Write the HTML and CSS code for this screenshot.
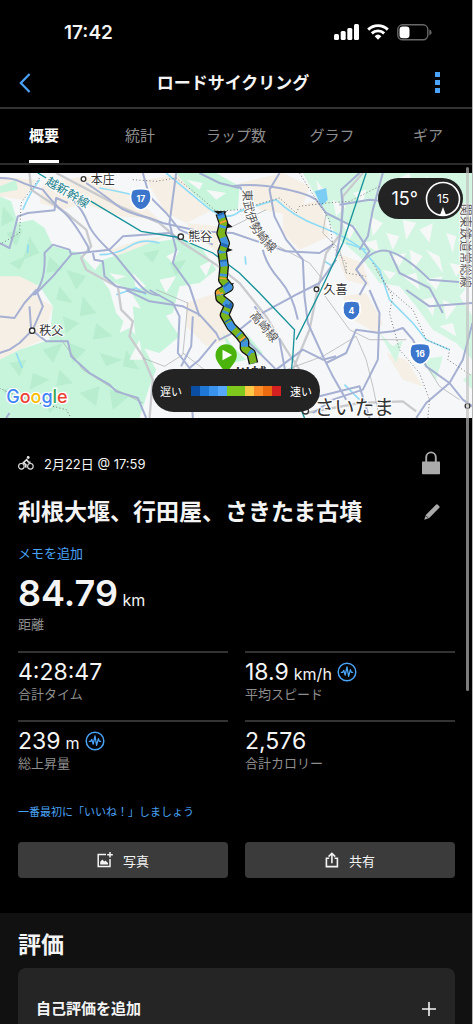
FILE: index.html
```html
<!DOCTYPE html>
<html lang="ja">
<head>
    <meta charset="UTF-8">
    <meta name="viewport" content="width=device-width, initial-scale=1">
    <title>ロードサイクリング</title>
    <link rel="stylesheet" href="styles.css">
</head>
<body>
    <div class="app">
        <div class="scroll-thumb"></div>

        <!-- Status bar -->
        <div class="status-bar">
            <span class="clock">17:42</span>
            <div class="status-icons">
                <svg width="25" height="16" viewBox="0 0 25 16" fill="#fff">
                    <rect x="0" y="10" width="5" height="6" rx="1.5"/>
                    <rect x="6.7" y="7" width="5" height="9" rx="1.5"/>
                    <rect x="13.3" y="4" width="5" height="12" rx="1.5"/>
                    <rect x="20" y="0" width="5" height="16" rx="1.5"/>
                </svg>
                <svg width="22" height="16" viewBox="0 0 22 16" fill="none" stroke="#fff" stroke-width="2.9">
                    <path d="M1.2 5.6 A14 14 0 0 1 20.8 5.6"/>
                    <path d="M4.8 9.4 A9 9 0 0 1 17.2 9.4"/>
                    <path d="M7.6 12.2 A5 5 0 0 1 14.4 12.2 L11 15.8 Z" fill="#fff" stroke="none"/>
                </svg>
                <svg width="35" height="17" viewBox="0 0 35 17">
                    <rect x="0.8" y="0.8" width="30" height="15" rx="4.8" fill="none" stroke="#686868" stroke-width="1.4"/>
                    <path d="M32.4 5.5 Q34.6 6.3 34.6 8.4 Q34.6 10.5 32.4 11.3 Z" fill="#686868"/>
                    <rect x="2.5" y="2.6" width="10" height="11.6" rx="3.2" fill="#fff"/>
                </svg>
            </div>
        </div>

        <!-- Title bar -->
        <header class="nav-bar">
            <button class="icon-btn" aria-label="戻る">
                <svg width="12" height="20" viewBox="0 0 12 20" fill="none" stroke="#4aa3f7" stroke-width="2.2">
                    <path d="M10.6 1 L1.8 10 L10.6 19"/>
                </svg>
            </button>
            <h1>ロードサイクリング</h1>
            <button class="icon-btn" aria-label="メニュー">
                <svg width="5" height="21" viewBox="0 0 5 21" fill="#4aa3f7">
                    <path d="M0 0h5v5H0zM0 8h5v5H0zM0 16h5v5H0z"/>
                </svg>
            </button>
        </header>

        <nav class="tabs">
            <a href="#" class="active">概要</a>
            <a href="#">統計</a>
            <a href="#">ラップ数</a>
            <a href="#">グラフ</a>
            <a href="#">ギア</a>
        </nav>

        <!-- Route map -->
        <div class="map">
            <svg class="map-canvas" viewBox="0 0 1419 735" preserveAspectRatio="xMidYMid slice">
                <defs>
                    <path id="ride" d="M662 121 L672 151 665 181 677 211 668 236 674 281 670 321 688 343 660 359 662 376 688 396 675 426 695 461 720 486 735 506 735 526 755 541 762 571"/>
                    <path id="tobu" d="M731 50 C730 130 752 190 836 256"/>
                </defs>
                <rect width="1419" height="735" fill="#f6f7f8"/>

                <!-- farmland and towns -->
                <g fill="#f5efe5">
                    <path d="M0 10 L110 20 70 80 0 70zM130 30 L260 10 400 70 480 140 360 130 250 90 190 110 120 90z"/>
                    <path d="M440 20 L560 0 600 90 640 110 560 150 500 120zM560 150 L650 160 660 240 600 200z"/>
                    <path d="M0 360 L60 340 160 400 130 500 60 530 0 560zM330 230 L420 200 500 190 440 220 360 260z"/>
                    <path d="M720 30 L850 0 930 40 900 130 780 110zM850 110 L960 80 990 190 900 230 850 180z"/>
                    <path d="M560 390 L650 360 700 400 690 500 620 520 560 460zM1030 370 L1100 360 1150 450 1130 480 1060 440z"/>
                    <path d="M1160 540 L1220 560 1270 640 1210 620zM1010 240 L1090 270 1110 340 1040 320zM0 300 L90 300 120 350 0 370z"/>
                </g>

                <!-- mountains -->
                <g fill="#c6f5dc">
                    <path d="M0 70 L35 85 55 150 100 140 135 165 160 220 240 240 285 290 330 350 350 420 420 500 470 590 450 640 420 735 0 735 0 560 60 530 150 500 160 400 120 340 60 310 0 310z"/>
                    <path d="M375 240 L450 210 545 195 610 230 650 290 600 330 540 340 520 420 450 450 390 350 280 300 310 260z"/>
                    <path d="M530 0 L650 0 720 40 715 110 640 115 580 60z"/>
                    <path d="M400 400 L500 430 540 490 480 540 410 520zM670 480 L700 520 740 560 700 570zM740 480 L790 540 760 560z"/>
                    <path d="M0 40 L50 20 55 50 0 60z"/>
                </g>
                <g fill="#d3f6e3">
                    <path d="M910 0 L1419 0 1419 320 1380 370 1419 430 1419 560 1370 510 1300 470 1250 400 1200 340 1140 330 1090 260 1010 190 960 90z"/>
                    <path d="M1140 480 L1180 520 1210 500 1190 570zM1260 560 L1330 550 1310 620zM1390 620 L1419 600 1419 650z"/>
                </g>

                <!-- relief -->
                <g fill="#b9edd0">
                    <path d="M10 100 L45 140 5 160zM20 180 L70 170 50 220zM90 190 L120 240 70 260zM30 270 L80 250 60 290zM150 250 L190 290 140 300zM200 290 L260 310 230 350zM180 340 L220 390 170 380z"/>
                    <path d="M250 370 L290 420 240 430zM190 430 L240 450 200 480zM290 450 L340 490 280 500zM130 530 L190 510 160 570zM30 570 L80 560 60 610zM210 510 L260 530 220 570zM100 600 L150 620 90 650z"/>
                    <path d="M180 590 L220 630 170 640zM300 540 L370 560 320 580zM380 530 L420 590 370 580zM240 660 L300 640 290 700zM330 650 L390 670 340 710zM10 650 L50 640 30 690zM130 670 L190 680 150 720zM430 240 L480 230 460 270zM510 270 L560 260 530 310z"/>
                </g>
                <g fill="#f6f8f8">
                    <path d="M380 420 L400 460 360 480zM400 300 L440 340 410 350zM420 500 L430 560 390 560zM500 250 L540 230 520 270zM480 320 L530 310 500 360zM560 20 L610 30 600 50zM620 50 L680 60 650 80zM600 280 L640 260 620 310zM330 300 L380 310 350 320z"/>
                    <path d="M950 20 L980 60 960 70zM1000 80 L1040 100 1010 130zM1060 60 L1100 50 1090 90zM1030 150 L1070 160 1050 200zM1110 130 L1150 150 1120 190zM1090 210 L1130 200 1140 240zM1160 180 L1200 190 1180 230z"/>
                    <path d="M1210 140 L1250 150 1220 200zM1260 170 L1300 150 1290 210zM1170 250 L1220 240 1200 280zM1230 230 L1270 250 1240 290zM1280 230 L1320 250 1330 300zM1210 310 L1250 300 1260 350zM1280 320 L1330 310 1310 350zM1340 180 L1370 190 1360 240z"/>
                    <path d="M1270 380 L1310 370 1300 430zM1330 380 L1370 400 1340 440zM1320 460 L1360 450 1370 490zM1190 20 L1230 0 1240 50zM1280 10 L1310 40 1270 60zM1350 270 L1400 280 1370 310zM1150 290 L1190 300 1170 320z"/>
                </g>

                <!-- water -->
                <path d="M945 55 L980 45 985 80 965 100z" fill="#7ccdf4"/>
                <g fill="none" stroke="#90dcf5" stroke-width="5">
                    <path d="M300 45 Q360 55 440 75M120 20 Q90 60 70 110M500 0 Q560 50 620 100 T720 115 L830 80 Q880 130 960 160 T1090 230 L1140 290 1170 380"/>
                    <path d="M300 245 Q350 245 390 220 T480 210M350 365 L410 345 440 365M50 540 L68 585M86 215 L84 240M737 250 L739 275M1040 210 L1100 230M975 265 L1000 280M1035 635 L1080 680M1170 380 L1240 450 1280 500 1350 530"/>
                </g>

                <!-- railways -->
                <g fill="none" stroke="#c9cbce" stroke-width="7">
                    <path d="M90 0 L95 50 200 120 260 170 275 220 245 255 260 290 350 340"/>
                    <path d="M170 0 L360 100 480 150 550 210 650 275 720 330 800 430 860 530 900 590"/>
                    <path d="M1090 0 L1030 70 1025 180 980 240 950 370 930 470 880 590"/>
                    <path d="M355 340 L365 410 400 445 390 490 430 550 460 620 450 735"/>
                    <path d="M920 720 L1080 690 1210 685 1250 715"/>
                </g>
                <g fill="none" stroke="#a8a9aa" stroke-width="2">
                    <path d="M430 555 L495 580 550 545 565 390 470 350M700 160 L800 110M780 190 L930 270 970 320M860 590 L970 550 1070 490 1100 560 1120 640 1140 735"/>
                    <path d="M980 120 L970 180 1020 230 1040 300M970 360 L1050 470 1110 500 1220 500M1270 560 L1320 640 1380 680M185 500 L250 590 330 640 430 690M550 540 L640 610"/>
                </g>

                <!-- roads -->
                <g fill="none" stroke="#a5b0d2" stroke-width="6" stroke-linejoin="round">
                    <path d="M0 15 Q40 15 60 25 T130 50 Q160 90 190 115 T265 220 L270 240"/>
                    <path d="M0 210 L30 225 40 190 55 130 85 120 165 112 170 75 205 90M215 75 Q250 110 265 150 T350 250 Q390 300 420 335 T480 366"/>
                    <path d="M100 366 Q140 330 135 240 L160 215 210 230 215 245 160 310 105 366M215 243 L330 230 370 190 510 180"/>
                    <path d="M260 30 Q320 70 350 95 T450 135 L490 150 600 175 700 180 860 235M430 0 L450 70 500 120 540 170 640 215"/>
                    <path d="M530 0 L510 150 530 230 520 270 570 340 600 430M510 180 L540 200"/>
                    <path d="M280 240 L285 260 310 265 315 310 350 340 440 360M0 430 L45 435 75 390 110 351 130 400 100 470 60 510 30 530 0 540M90 400 L95 470 140 505 205 505 215 550 270 600 330 635 350 655 415 675 440 735"/>
                    <path d="M380 351 L450 385 550 400 600 425 650 480 660 500 720 470 770 430 890 365 960 330 1010 260"/>
                    <path d="M450 351 L520 390 540 430 535 540 570 585 600 560 650 500M570 585 L580 735M580 430 L575 520 545 580"/>
                    <path d="M720 40 L740 70 M699 40 Q760 30 840 45 T950 80 L980 120 1060 160 1110 235 1070 290 1100 330 1080 366"/>
                    <path d="M840 0 L810 50 825 130 860 200 910 260 915 370 925 450 975 560 1000 610 1040 680"/>
                    <path d="M1080 0 L1025 50 1030 100 1025 170 1010 250M1150 0 L1120 110 1105 190 1080 230M1020 95 L1110 80 1220 90"/>
                    <path d="M790 230 Q800 275 840 320 T895 440M860 235 L960 240 1000 215"/>
                    <path d="M765 400 L840 500 860 610 830 650M720 480 L760 520 830 590 910 530 970 560 1010 550"/>
                    <path d="M1110 351 L1140 420 1135 560 1090 650 1000 680 940 720M850 700 L960 670 1080 640 1110 735M1140 480 L1070 470 1040 540 980 570"/>
                    <path d="M1070 290 Q1120 220 1170 235 T1290 320 L1419 330M1170 235 L1200 300 1290 345 1330 420"/>
                    <path d="M1135 480 L1180 475 1210 465 1240 500 1280 580 1350 630 1390 680 1419 700M1419 450 L1390 560 1350 630 1280 690 1250 735"/>
                    <path d="M600 0 L660 30 720 45M1220 351 L1290 400 1419 390M20 735 L30 720"/>
                </g>

                <!-- prefecture borders -->
                <g fill="none" stroke="#777" stroke-width="3" stroke-dasharray="3 7">
                    <path d="M120 15 L65 90 60 180 0 215M0 645 L30 660 120 690 200 710 215 735M400 20 L470 25 530 15 600 70 650 115 720 110 840 75 890 120 900 100 980 90 1050 85 1140 40"/>
                    <path d="M900 0 L950 80 990 140 1000 220 1040 270 1040 300 1100 310M1130 290 L1180 370 1170 420 1200 530 1260 600 1290 680 1285 735"/>
                    <path d="M1120 270 L1170 350 1240 410 1280 500 1350 530 1345 560 1419 610"/>
                </g>

                <!-- shinkansen -->
                <g fill="none" stroke="#18939b" stroke-width="4">
                    <path d="M115 0 L140 15M270 82 L425 175 530 192 640 240 720 300 780 360 885 470 880 550 875 600"/>
                    <path d="M1100 0 L1030 210 960 360 890 500"/>
                    <path d="M905 710 L915 735"/>
                </g>

                <!-- place names -->
                <g class="place">
                    <circle cx="252" cy="18" r="7"/><text x="274" y="33">本庄</text>
                    <circle cx="544" cy="191" r="8"/><text x="566" y="205">熊谷</text>
                    <circle cx="98" cy="473" r="8"/><text x="119" y="486">秩父</text>
                    <circle cx="951" cy="349" r="7"/><text x="972" y="363">久喜</text>
                    <circle cx="918" cy="714" r="9"/><text class="city" x="945" y="727">さいたま</text>
                    <circle cx="1404" cy="699" r="7"/>
                    <text class="town" x="705" y="622">川越</text>
                </g>
                <g class="line-name">
                    <text><textPath href="#tobu">東武伊勢崎線</textPath></text>
                    <text transform="translate(750 428) rotate(50)">高崎線</text>
                    <text transform="translate(1384 92) rotate(90)">関東鉄道常総線</text>
                    <text class="shinkansen" transform="translate(136 32) rotate(31)">越新幹線</text>
                </g>

                <!-- route shields -->
                <g class="shield" transform="translate(424 79)">
                    <path d="M-26 -28 Q0 -36 26 -28 Q34 -10 29 6 Q20 28 0 32 Q-20 28 -29 6 Q-34 -10 -26 -28z"/><text y="9">17</text>
                </g>
                <g class="shield" transform="translate(1056 413)">
                    <path d="M-22 -26 Q0 -33 22 -26 Q29 -10 25 6 Q18 25 0 29 Q-18 25 -25 6 Q-29 -10 -22 -26z"/><text y="9">4</text>
                </g>
                <g class="shield" transform="translate(1262 543)">
                    <path d="M-26 -28 Q0 -36 26 -28 Q34 -10 29 6 Q20 28 0 32 Q-20 28 -29 6 Q-34 -10 -26 -28z"/><text y="9">16</text>
                </g>

                <!-- ride track, coloured by speed -->
                <g class="track">
                    <path d="M642 113 L682 115 668 132zM682 148 L700 162 678 166zM680 223 L700 231 676 239zM644 228 L660 234zM672 330 L704 331 686 352z" fill="#141414"/>
                    <use href="#ride" class="outline"/>
                    <use href="#ride" class="speed-mid"/>
                    <use href="#ride" class="speed-slow"/>
                    <use href="#ride" class="speed-slower"/>
                    <use href="#ride" class="speed-fast"/>
                </g>
                <g transform="translate(680 546)">
                    <path d="M-32 0 A32 32 0 1 1 32 0 C32 22 12 36 0 56 C-12 36 -32 22 -32 0z" fill="#4ab40c"/>
                    <path d="M-11 -16 L18 0 -11 16z" fill="#fff"/>
                </g>

                <text class="google" x="20" y="691"><tspan fill="#4285f4">G</tspan><tspan fill="#ea4335">o</tspan><tspan fill="#fbbc05">o</tspan><tspan fill="#4285f4">g</tspan><tspan fill="#34a853">l</tspan><tspan fill="#ea4335">e</tspan></text>
            </svg>

            <div class="weather">
                <span>15°</span>
                <svg width="36" height="36" viewBox="0 0 36 36">
                    <circle cx="18" cy="18" r="16.5" fill="none" stroke="#fff" stroke-width="1.6"/>
                    <path d="M18 26 L21 34 Q18 35 15 34z" fill="#fff"/>
                    <text x="18" y="22" text-anchor="middle">15</text>
                </svg>
            </div>

            <div class="legend">
                <span>遅い</span>
                <div class="legend-bar">
                    <i class="s1"></i><i class="s2"></i><i class="s3"></i><i class="s4"></i><i class="s5"></i><i class="s5"></i><i class="s6"></i><i class="s7"></i><i class="s8"></i><i class="s9"></i>
                </div>
                <span>速い</span>
            </div>
        </div>

        <!-- Activity summary -->
        <main class="summary">
            <div class="row meta">
                <svg width="16" height="14" viewBox="0 0 16 14" fill="none" stroke="#e8e8e8" stroke-width="1.1">
                    <circle cx="3.4" cy="10.3" r="2.8"/>
                    <circle cx="12.4" cy="10.3" r="2.8"/>
                    <path d="M7.8 11.6 L7.9 8.6 L5.4 6.6 L8.6 3.6 L10.4 6 L12.6 6.2" stroke-width="1.6"/>
                    <circle cx="10.2" cy="1.5" r="1.4" fill="#e8e8e8" stroke="none"/>
                </svg>
                <span class="date">2月22日 @ 17:59</span>
                <button class="icon-btn" aria-label="非公開">
                    <svg width="18" height="24" viewBox="0 0 18 24">
                        <path d="M4.2 12 V6.2 A4.8 4.8 0 0 1 13.8 6.2 V12" fill="none" stroke="#aaa" stroke-width="1.9"/>
                        <rect y="10.6" width="18" height="12.6" rx="0.6" fill="#aaa"/>
                    </svg>
                </button>
            </div>

            <div class="row heading">
                <h2>利根大堰、行田屋、さきたま古墳</h2>
                <button class="icon-btn" aria-label="編集">
                    <svg width="16" height="16" viewBox="0 0 16 16" fill="#aaa">
                        <path d="M12.2 0.6 Q13 0 13.8 0.7 L15.3 2.2 Q16 3 15.3 3.8 L5.2 14 L0.4 15.8 L0.3 15.6 L2 10.7z"/>
                        <path d="M2.4 12.2 L3.8 13.6" stroke="#000" stroke-width="0.9"/>
                    </svg>
                </button>
            </div>

            <a href="#" class="memo">メモを追加</a>

            <div class="distance">
                <div><strong>84.79</strong> <span class="unit">km</span></div>
                <div class="label">距離</div>
            </div>

            <div class="stats">
                <div class="stat">
                    <div class="value">4:28:47</div>
                    <div class="label">合計タイム</div>
                </div>
                <div class="stat">
                    <div class="value">18.9 <span class="unit">km/h</span>
                        <svg width="20" height="20" viewBox="0 0 20 20" fill="none" stroke="#4aa3f7" stroke-linejoin="round">
                            <circle cx="10" cy="10" r="8.8" stroke-width="1.5"/>
                            <path d="M3.8 10.4 H5.6 L6.8 8.4 L8.2 13.2 L10 5 L11.6 14.4 L13.4 7.6 L14.4 10.4 H16.2" stroke-width="1.3"/>
                        </svg>
                    </div>
                    <div class="label">平均スピード</div>
                </div>
                <div class="stat">
                    <div class="value">239 <span class="unit">m</span>
                        <svg width="20" height="20" viewBox="0 0 20 20" fill="none" stroke="#4aa3f7" stroke-linejoin="round">
                            <circle cx="10" cy="10" r="8.8" stroke-width="1.5"/>
                            <path d="M3.8 10.4 H5.6 L6.8 8.4 L8.2 13.2 L10 5 L11.6 14.4 L13.4 7.6 L14.4 10.4 H16.2" stroke-width="1.3"/>
                        </svg>
                    </div>
                    <div class="label">総上昇量</div>
                </div>
                <div class="stat">
                    <div class="value">2,576</div>
                    <div class="label">合計カロリー</div>
                </div>
            </div>

            <a href="#" class="like">一番最初に「いいね！」しましょう</a>

            <div class="actions">
                <button>
                    <svg width="16" height="16" viewBox="0 0 16 16" fill="none" stroke="#f4f4f4" stroke-width="1.5">
                        <path d="M9 2.6 H1.2 V14.6 H13 V7"/>
                        <path d="M13 0 V5.6 M10.2 2.8 H15.8"/>
                        <path d="M3.2 12.4 V9.8 L5.4 7.4 L7.2 9.4 L8.4 8.6 L11 11 V12.4z" fill="#f4f4f4" stroke="none"/>
                    </svg>
                    写真
                </button>
                <button>
                    <svg width="14" height="16" viewBox="0 0 14 16" fill="none" stroke="#f4f4f4" stroke-width="1.6">
                        <path d="M4.2 6.2 H1.4 V14.6 H12.4 V6.2 H9.6"/>
                        <path d="M6.9 11.2 V2 M3.6 4.6 L6.9 1.3 L10.2 4.6"/>
                    </svg>
                    共有
                </button>
            </div>
        </main>

        <!-- Self evaluation -->
        <section class="review">
            <h2>評価</h2>
            <button class="card">
                <span>自己評価を追加</span>
                <svg width="14" height="14" viewBox="0 0 14 14" stroke="#f4f4f4" stroke-width="1.6">
                    <path d="M7 0 V14 M0 7 H14"/>
                </svg>
            </button>
        </section>
    </div>
</body>
</html>
```
FILE: styles.css
```css
* {
    box-sizing: border-box;
}
body {
    margin: 0;
    background-color: #000;
    color: #f4f4f4;
    font-family: Inter, "Noto Sans CJK JP", sans-serif;
}
h1, h2 {
    margin: 0;
    font-weight: bold;
}
a {
    color: #4aa3f7;
    text-decoration: none;
}
button {
    font-family: inherit;
    color: inherit;
    border: none;
    cursor: pointer;
}
svg {
    display: block;
    flex: none;
}
.app {
    position: relative;
    display: flex;
    flex-direction: column;
    min-height: 100vh;
    border-right: 1px solid #b4b4b4;
    overflow: hidden;
}
.scroll-thumb {
    position: absolute;
    z-index: 2;
    top: 167px;
    right: 3px;
    width: 3px;
    height: 524px;
    border-radius: 2px;
    background-color: rgba(190, 190, 190, 0.65);
}
.icon-btn {
    padding: 0;
    background: none;
}

/* top bars */
.status-bar {
    display: flex;
    justify-content: space-between;
    align-items: center;
    height: 64px;
    padding: 0 40px 0 64px;
}
.clock {
    font-size: 19px;
    font-weight: 600;
}
.status-icons {
    display: flex;
    align-items: center;
    gap: 8px;
}
.nav-bar {
    display: flex;
    justify-content: space-between;
    align-items: center;
    height: 45px;
    padding: 0 32px 6px 19px;
    border-bottom: 2px solid #333;
}
.nav-bar h1 {
    font-size: 17px;
    line-height: 24px;
}
.tabs {
    display: grid;
    grid-template-columns: repeat(5, 1fr);
    justify-items: center;
    height: 56px;
    margin: 0 -4px;
    border-bottom: 2px solid #2c2c2c;
}
.tabs a {
    padding-top: 15px;
    font-size: 15px;
    line-height: 24px;
    color: #8e8e8e;
}
.tabs a.active {
    color: #fff;
    font-weight: bold;
    border-bottom: 3px solid #fff;
}

/* map */
.map {
    position: relative;
    height: 245px;
    margin-top: 8px;
    overflow: hidden;
}
.map-canvas {
    width: 100%;
    height: 100%;
}
.map text {
    font-family: Inter, "Noto Sans CJK JP", sans-serif;
}
.place circle {
    fill: #fff;
    stroke: #333;
    stroke-width: 4;
}
.place text, .line-name text {
    font-size: 36px;
    fill: #333;
    stroke: #fff;
    stroke-width: 6;
    paint-order: stroke;
}
.place .city {
    font-size: 60px;
}
.place .town {
    font-size: 48px;
    font-weight: bold;
}
.line-name text {
    fill: #555;
}
.line-name .shinkansen {
    fill: #18808c;
}
.shield path {
    fill: #3b76cc;
    stroke: #fff;
    stroke-width: 5;
}
.shield text {
    font-size: 26px;
    font-weight: bold;
    fill: #fff;
    text-anchor: middle;
}
.map-canvas .google {
    font-size: 54px;
    font-weight: 500;
    stroke: #fff;
    stroke-width: 8;
    paint-order: stroke;
}
.track use {
    fill: none;
    stroke-width: 21px;
    stroke-linejoin: round;
}
.track .outline {
    stroke: #141414;
    stroke-width: 29px;
}
.speed-mid {
    stroke: #7ab51d;
}
.speed-slow {
    stroke: #3f93e0;
    stroke-dasharray: 16 22 8 30 26 18 6 24;
}
.speed-slower {
    stroke: #2468b8;
    stroke-dasharray: 6 90 10 40 5 70;
}
.speed-fast {
    stroke: #f0a030;
    stroke-dasharray: 0 24 6 170 4 62 7 140;
}
.weather {
    position: absolute;
    top: 5px;
    right: 9px;
    display: flex;
    align-items: center;
    gap: 7px;
    height: 41px;
    padding: 0 2px 0 14px;
    border-radius: 21px;
    background-color: #232323;
    color: #fff;
    font-size: 18px;
}
.weather text {
    font-size: 12px;
    fill: #fff;
}
.legend {
    position: absolute;
    left: 50%;
    bottom: 6px;
    transform: translateX(-50%);
    display: flex;
    align-items: center;
    gap: 9px;
    height: 43px;
    padding: 0 8px;
    border-radius: 22px;
    background-color: #232323;
    color: #fff;
    font-size: 11px;
    white-space: nowrap;
}
.legend-bar {
    display: flex;
}
.legend-bar i {
    width: 9px;
    height: 10px;
}
.s1 { background-color: #0b4da2; }
.s2 { background-color: #1f78d6; }
.s3 { background-color: #3a94ee; }
.s4 { background-color: #55a8fb; }
.s5 { background-color: #7fc91e; }
.s6 { background-color: #fdc748; }
.s7 { background-color: #fb8e28; }
.s8 { background-color: #ec6a10; }
.s9 { background-color: #d42020; }

/* summary */
.summary {
    padding: 31px 17px 35px 18px;
}
.row {
    display: flex;
    align-items: center;
    justify-content: space-between;
    padding-right: 15px;
}
.meta {
    height: 28px;
    gap: 10px;
}
.date {
    flex: 1;
    font-size: 13px;
}
.heading {
    height: 34px;
    margin-top: 18px;
}
.heading h2, .review h2 {
    font-size: 23px;
    line-height: 34px;
}
.memo {
    display: block;
    width: max-content;
    margin-top: 14px;
    font-size: 13px;
    line-height: 20px;
}
.distance {
    height: 88px;
    padding-top: 8px;
}
.distance strong {
    font-size: 36px;
    line-height: 44px;
    font-weight: 600;
}
.distance .unit {
    font-size: 16px;
}
.label {
    font-size: 13px;
    line-height: 18px;
    color: #8e8e8e;
}
.stats {
    display: grid;
    grid-template-columns: 1fr 1fr;
    column-gap: 17px;
}
.stat {
    height: 69px;
    padding-top: 6px;
    border-top: 2px solid #333;
}
.value {
    display: flex;
    align-items: baseline;
    gap: 5px;
    height: 26px;
    font-size: 23px;
    line-height: 26px;
}
.value .unit {
    font-size: 16px;
}
.value svg {
    align-self: center;
}
.like {
    display: block;
    width: max-content;
    margin-top: 14px;
    font-size: 11px;
    line-height: 18px;
}
.actions {
    display: grid;
    grid-template-columns: 1fr 1fr;
    gap: 17px;
    margin-top: 21px;
}
.actions button {
    display: flex;
    justify-content: center;
    align-items: center;
    gap: 10px;
    height: 36px;
    border-radius: 4px;
    background-color: #3b3b3b;
    font-size: 13px;
}

/* review */
.review {
    flex: 1;
    display: flex;
    flex-direction: column;
    padding: 15px 17px 0 18px;
    background-color: #111;
}
.card {
    flex: 1;
    display: flex;
    justify-content: space-between;
    align-items: flex-start;
    margin-top: 6px;
    padding: 30px 19px 0 18px;
    border-radius: 8px 8px 0 0;
    background-color: #252525;
    font-size: 15px;
    font-weight: bold;
    line-height: 22px;
}
.card svg {
    margin-top: 4px;
}
```
